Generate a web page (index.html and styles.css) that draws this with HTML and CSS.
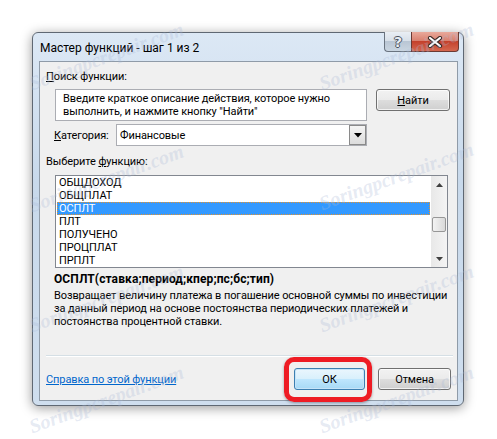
FILE: index.html
```html
<!DOCTYPE html>
<html lang="ru">
<head>
    <meta charset="UTF-8">
    <meta name="viewport" content="width=device-width, initial-scale=1.0">
    <title>Мастер функций</title>
    <link rel="stylesheet" href="styles.css">
</head>
<body>
    <div class="window">
        <div class="titlebar">
            <span class="title">Мастер функций - шаг 1 из 2</span>
            <div class="caption-buttons">
                <span class="cap-help">?</span>
                <span class="cap-close">
                    <svg width="16" height="12" viewBox="0 0 16 12">
                        <path d="M3 2 L13 10 M13 2 L3 10" stroke="#3a2a26" stroke-width="4.2" stroke-linecap="round" fill="none"/>
                        <path d="M3 2 L13 10 M13 2 L3 10" stroke="#ffffff" stroke-width="2.2" stroke-linecap="round" fill="none"/>
                    </svg>
                </span>
            </div>
        </div>

        <div class="content">
            <div class="label"><u>П</u>оиск функции:</div>
            <div class="search-row">
                <div class="search-box">Введите краткое описание действия, которое нужно<br>выполнить, и нажмите кнопку "Найти"</div>
                <button class="btn find"><u>Н</u>айти</button>
            </div>

            <div class="category-row">
                <span class="category-label"><u>К</u>атегория:</span>
                <div class="combo">
                    <span class="combo-value">Финансовые</span>
                    <span class="combo-arrow">
                        <svg width="8" height="5" viewBox="0 0 8 5"><path d="M0 0 H8 L4 4.5 Z" fill="#000"/></svg>
                    </span>
                </div>
            </div>

            <div class="label pick">Выберите <u>ф</u>ункцию:</div>
            <div class="listbox">
                <ul class="items">
                    <li>ОБЩДОХОД</li>
                    <li>ОБЩПЛАТ</li>
                    <li class="selected">ОСПЛТ</li>
                    <li>ПЛТ</li>
                    <li>ПОЛУЧЕНО</li>
                    <li>ПРОЦПЛАТ</li>
                    <li>ПРПЛТ</li>
                </ul>
                <div class="scrollbar">
                    <span class="arrow">
                        <svg width="7" height="4" viewBox="0 0 7 4"><path d="M3.5 0 L7 4 H0 Z" fill="#404040"/></svg>
                    </span>
                    <div class="track"><span class="thumb"></span></div>
                    <span class="arrow">
                        <svg width="7" height="4" viewBox="0 0 7 4"><path d="M0 0 H7 L3.5 4 Z" fill="#404040"/></svg>
                    </span>
                </div>
            </div>

            <div class="signature">ОСПЛТ(ставка;период;кпер;пс;бс;тип)</div>
            <div class="description">Возвращает величину платежа в погашение основной суммы по инвестиции<br>за данный период на основе постоянства периодических платежей и<br>постоянства процентной ставки.</div>

            <div class="separator"></div>

            <div class="footer">
                <a class="help-link" href="#">Справка по этой функции</a>
                <div class="buttons">
                    <div class="ok-wrap">
                        <button class="btn ok">ОК</button>
                        <span class="highlight"></span>
                    </div>
                    <button class="btn cancel">Отмена</button>
                </div>
            </div>
        </div>
    </div>

    <div class="watermarks">
        <span class="wm wm1">Soringpcrepair.com</span>
        <span class="wm wm2">Soringpcrepair.com</span>
        <span class="wm wm3">Soringpcrepair.com</span>
        <span class="wm wm4">Soringpcrepair.com</span>
        <span class="wm wm5">Soringpcrepair.com</span>
        <span class="wm wm6">Soringpcrepair.com</span>
        <span class="wm wm7">Soringpcrepair.com</span>
        <span class="wm wm8">Soringpcrepair.com</span>
    </div>
</body>
</html>
```

FILE: styles.css
```css
body {
    box-sizing: border-box;
    margin: 0;
    padding: 32px 0 0 32px;
    background: #fff;
    font-family: Roboto, "Liberation Sans", sans-serif;
    font-size: 11px;
    letter-spacing: -0.1px;
    color: #000;
    width: 497px;
    height: 439px;
    overflow: hidden;
    position: relative;
}
.window {
    box-sizing: border-box;
    width: 432px;
    height: 374px;
    padding: 0 5px 4px 6px;
    border: 1px solid #5f6873;
    border-radius: 6px;
    background: linear-gradient(#dce8f5, #c8d9eb 40%, #cfdeee);
    box-shadow: 0 2px 12px rgba(0, 0, 0, 0.4);
}
.titlebar {
    height: 28px;
    display: flex;
    align-items: center;
    justify-content: space-between;
}
.title {
    font-size: 12px;
    letter-spacing: 0;
    padding-left: 1px;
    padding-top: 1px;
    color: #000;
}
.caption-buttons {
    align-self: flex-start;
    display: flex;
    margin-right: -1px;
    margin-top: -1px;
}
.cap-help,
.cap-close {
    box-sizing: border-box;
    height: 20px;
    display: flex;
    align-items: center;
    justify-content: center;
    border: 1px solid #6a7480;
    border-top: none;
}
.cap-help {
    width: 27px;
    border-right: none;
    border-radius: 0 0 0 4px;
    background: linear-gradient(#e9eef4, #d8e0e9 45%, #b9c6d4 50%, #c9d5e1);
    font-family: "DejaVu Sans", sans-serif;
    font-size: 14px;
    font-weight: bold;
    color: #e8eef4;
    text-shadow: -1px 0 #4a525c, 1px 0 #4a525c, 0 -1px #4a525c, 0 1px #4a525c;
}
.cap-close {
    width: 48px;
    border-radius: 0 0 4px 0;
    border-color: #6b3a34;
    background: linear-gradient(#e9a99b, #d98170 45%, #c4412c 50%, #d4674f);
}
.content {
    box-sizing: border-box;
    height: 340px;
    border: 1px solid #8f9ba8;
    background: #f0f0f0;
    padding: 7px 6px 0 6px;
}
.label {
    line-height: 15px;
}
.label.pick {
    margin-top: 8px;
}
.search-row {
    display: flex;
    align-items: flex-start;
    margin: 5px 0 0 9px;
}
.search-box {
    box-sizing: border-box;
    width: 312px;
    height: 32px;
    border: 1px solid #abadb3;
    background: #fff;
    padding: 2px 0 0 7px;
    line-height: 13px;
    white-space: nowrap;
}
.btn {
    box-sizing: border-box;
    height: 22px;
    border: 1px solid #707070;
    border-radius: 3px;
    background: linear-gradient(#f2f2f2, #ebebeb 48%, #dddddd 52%, #cfcfcf);
    box-shadow: inset 0 0 0 1px rgba(255, 255, 255, 0.7);
    font-family: inherit;
    font-size: 11px;
    letter-spacing: inherit;
    color: #000;
    padding: 0;
}
.find {
    width: 74px;
    margin-left: 9px;
}
.category-row {
    display: flex;
    align-items: center;
    margin: 3px 0 0 8px;
}
.category-label {
    flex: 0 0 62px;
    white-space: nowrap;
}
.combo {
    box-sizing: border-box;
    width: 251px;
    height: 22px;
    border: 1px solid #abadb3;
    background: #fff;
    display: flex;
    align-items: center;
    justify-content: space-between;
    padding-left: 3px;
}
.combo-arrow {
    box-sizing: border-box;
    width: 17px;
    height: 20px;
    border: 1px solid #8a8a8a;
    background: linear-gradient(#f4f4f4, #dcdcdc);
    display: flex;
    align-items: center;
    justify-content: center;
}
.listbox {
    box-sizing: border-box;
    margin: 6px 0 0 9px;
    width: 393px;
    height: 93px;
    border: 1px solid #828790;
    background: #fff;
    display: flex;
}
.items {
    list-style: none;
    margin: 0;
    padding: 0 0 0 1px;
    flex: 1;
}
.items li {
    box-sizing: border-box;
    height: 13px;
    line-height: 13px;
    padding-left: 2px;
    white-space: nowrap;
}
.items li.selected {
    background: #3399ff;
    color: #fff;
    border: 1px dotted #e3932f;
    line-height: 11px;
    padding-left: 1px;
}
.scrollbar {
    width: 16px;
    margin-left: 1px;
    display: flex;
    flex-direction: column;
    background: linear-gradient(90deg, #e8e8e8, #f4f4f4);
}
.arrow {
    height: 17px;
    display: flex;
    align-items: center;
    justify-content: center;
}
.track {
    flex: 1;
    padding-top: 24px;
}
.thumb {
    display: block;
    box-sizing: border-box;
    width: 14px;
    height: 15px;
    margin-left: 1px;
    border: 1px solid #979797;
    border-radius: 2px;
    background: linear-gradient(90deg, #f3f3f3, #e6e6e6 50%, #d9d9d9);
}
.signature {
    margin: 4px 0 0 8px;
    line-height: 15px;
    font-size: 12px;
    letter-spacing: 0.1px;
    font-weight: bold;
}
.description {
    margin: 2px 0 0 8px;
    line-height: 13px;
    white-space: nowrap;
}
.separator {
    margin: 27px -2px 0 0;
    height: 1px;
    background: #d5dfe5;
    border-bottom: 1px solid #fff;
}
.footer {
    display: flex;
    align-items: center;
    justify-content: space-between;
    margin-top: 11px;
}
.help-link {
    color: #0066cc;
    text-decoration: underline;
}
.buttons {
    display: flex;
    gap: 13px;
}
.ok-wrap {
    position: relative;
}
.ok {
    width: 71px;
    display: block;
    border-color: #3c7fb1;
    box-shadow: inset 0 0 0 1px #c6e4f8;
    background: linear-gradient(#eaf6fd, #d9f0fc 48%, #bee6fd 52%, #a7d9f5);
}
.cancel {
    width: 73px;
}
.highlight {
    position: absolute;
    left: -10px;
    top: -11px;
    width: 88px;
    height: 45px;
    box-sizing: border-box;
    border: 5px solid #ee1c24;
    border-radius: 10px;
    box-shadow: 0 1px 3px rgba(0, 0, 0, 0.35);
}
.watermarks {
    position: absolute;
    left: 0;
    top: 0;
    width: 497px;
    height: 439px;
    overflow: hidden;
    pointer-events: none;
}
.wm {
    position: absolute;
    font-family: "Liberation Serif", serif;
    font-style: italic;
    font-weight: bold;
    font-size: 20px;
    letter-spacing: 0;
    color: rgba(170, 185, 215, 0.3);
    transform: rotate(-20deg);
    white-space: nowrap;
}
.wm1 { left: 25px; top: 45px; }
.wm2 { left: 315px; top: 45px; }
.wm3 { left: 25px; top: 167px; }
.wm4 { left: 315px; top: 165px; }
.wm5 { left: 25px; top: 287px; }
.wm6 { left: 315px; top: 287px; }
.wm7 { left: 25px; top: 388px; }
.wm8 { left: 315px; top: 388px; }
```
